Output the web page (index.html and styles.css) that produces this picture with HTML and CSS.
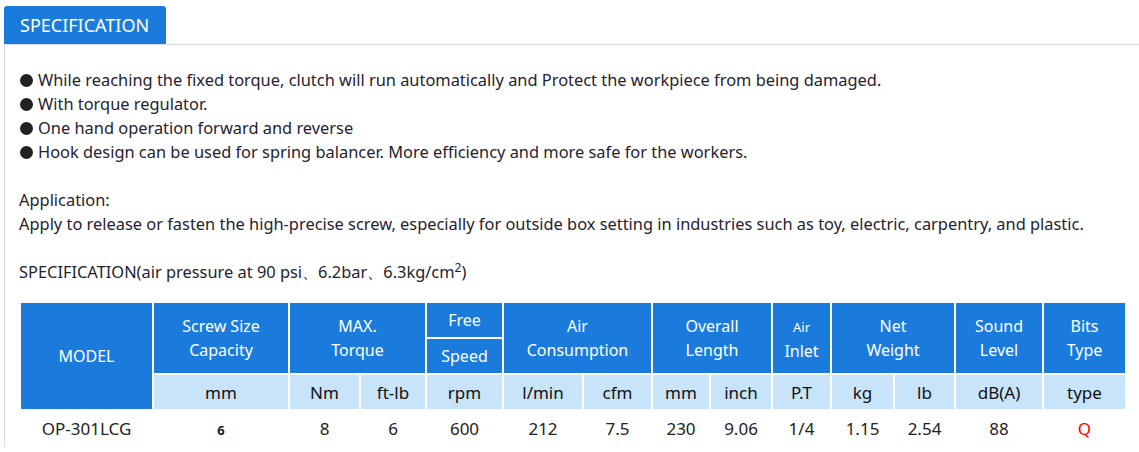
FILE: index.html
```html
<!DOCTYPE html>
<html>
<head>
<meta charset="utf-8">
<link rel="stylesheet" href="styles.css">
</head>
<body>
<div class="wrap">
  <div class="tabs"><div class="tab">SPECIFICATION</div></div>
  <div class="panel">
    <div class="text">
      <div><span class="dot"></span>While reaching the fixed torque, clutch will run automatically and Protect the workpiece from being damaged.</div>
      <div><span class="dot"></span>With torque regulator.</div>
      <div><span class="dot"></span>One hand operation forward and reverse</div>
      <div><span class="dot"></span>Hook design can be used for spring balancer. More efficiency and more safe for the workers.</div>
      <div class="blank"></div>
      <div>Application:</div>
      <div>Apply to release or fasten the high-precise screw, especially for outside box setting in industries such as toy, electric, carpentry, and plastic.</div>
      <div class="blank"></div>
      <div>SPECIFICATION(air pressure at 90 psi、6.2bar、6.3kg/cm<sup>2</sup>)</div>
    </div>
    <table class="spec">
      <colgroup>
        <col style="width:131px"><col style="width:134px"><col style="width:69px"><col style="width:64px"><col style="width:75px"><col style="width:78px"><col style="width:67px"><col style="width:56px"><col style="width:60px"><col style="width:57px"><col style="width:61px"><col style="width:59px"><col style="width:86px"><col style="width:81px">
      </colgroup>
      <tr class="h1">
        <th rowspan="3">MODEL</th>
        <th rowspan="2">Screw Size<br>Capacity</th>
        <th rowspan="2" colspan="2">MAX.<br>Torque</th>
        <th class="half">Free</th>
        <th rowspan="2" colspan="2">Air<br>Consumption</th>
        <th rowspan="2" colspan="2">Overall<br>Length</th>
        <th rowspan="2"><span class="small">Air</span><br>Inlet</th>
        <th rowspan="2" colspan="2">Net<br>Weight</th>
        <th rowspan="2">Sound<br>Level</th>
        <th rowspan="2">Bits<br>Type</th>
      </tr>
      <tr class="h1b">
        <th class="half">Speed</th>
      </tr>
      <tr class="h2">
        <td>mm</td><td>Nm</td><td>ft-lb</td><td>rpm</td><td>l/min</td><td>cfm</td><td>mm</td><td>inch</td><td>P.T</td><td>kg</td><td>lb</td><td>dB(A)</td><td>type</td>
      </tr>
      <tr class="data">
        <td>OP-301LCG</td><td><b class="bold6">6</b></td><td>8</td><td>6</td><td>600</td><td>212</td><td>7.5</td><td>230</td><td>9.06</td><td>1/4</td><td>1.15</td><td>2.54</td><td>88</td><td class="red">Q</td>
      </tr>
    </table>
  </div>
</div>
</body>
</html>
```

FILE: styles.css
```css
html, body {
  margin: 0;
  padding: 0;
  background: #fff;
}
body {
  font-family: "Noto Sans", "Open Sans", sans-serif;
  color: #222;
  font-size: 15px;
}
.wrap {
  margin-left: 4px;
  padding-top: 6px;
}
.tabs {
  border-bottom: 1px solid #dcdcdc;
  display: flex;
}
.tab {
  background: #1b7bdc;
  color: #fff;
  width: 162px;
  height: 38px;
  box-sizing: border-box;
  padding-left: 16px;
  font-size: 18px;
  line-height: 38px;
  border-radius: 3px 3px 0 0;
}
.panel {
  border-left: 1px solid #dcdcdc;
  padding: 23px 0 0 14px;
}
.text {
  line-height: 24px;
  font-size: 16.4px;
  color: #1f2230;
  white-space: nowrap;
}
.dot {
  display: inline-block;
  width: 13px;
  height: 13px;
  border-radius: 50%;
  background: #222;
  margin: 0 5px 0 1px;
  vertical-align: -1px;
}
.blank {
  height: 24px;
}
sup {
  font-size: 12px;
  vertical-align: 6px;
  line-height: 0;
}
.spec {
  border-collapse: separate;
  border-spacing: 2px;
  table-layout: fixed;
  margin-top: 17px;
  margin-left: 0;
  font-size: 16px;
}
.spec th, .spec td {
  padding: 0;
  text-align: center;
  vertical-align: middle;
}
.spec th {
  background: #1b7bdc;
  color: #fff;
  font-weight: normal;
  line-height: 24px;
}
.spec .h1 th, .spec .h1b th {
  height: 34px;
}
.small {
  font-size: 13px;
}
.spec .h2 td {
  background: #c8e4fa;
  color: #111;
  height: 34px;
  font-size: 17px;
}
.spec .data td {
  height: 34px;
  color: #222;
  font-size: 17px;
}
.spec .data .bold6 {
  font-size: 13px;
  font-weight: bold;
}
.spec .data td.red {
  color: #f00;
}
```
